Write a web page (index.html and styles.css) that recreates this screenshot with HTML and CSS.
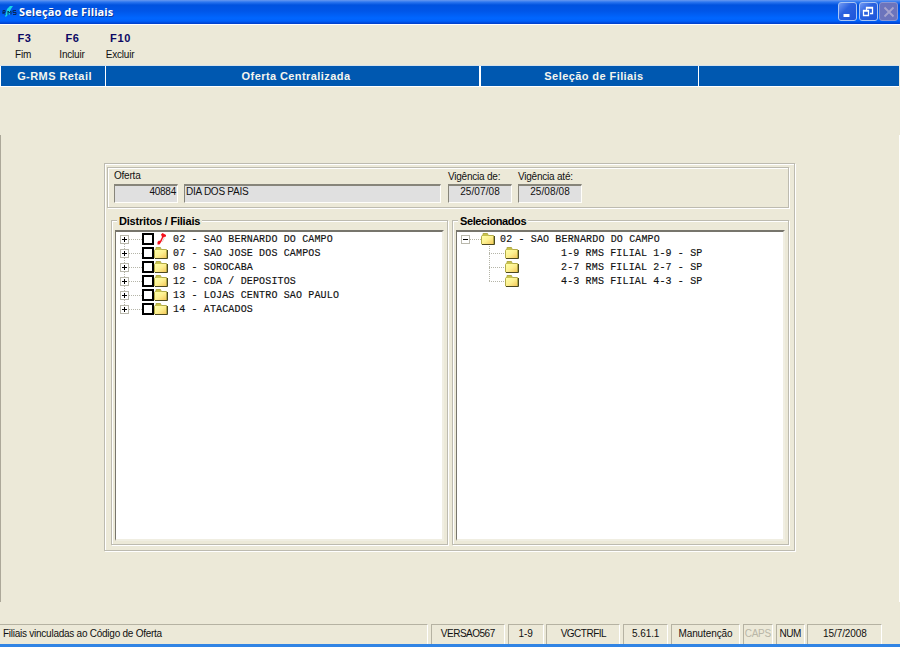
FILE: index.html
```html
<!DOCTYPE html>
<html lang="pt-BR">
<head>
<meta charset="utf-8">
<title>Seleção de Filiais</title>
<link rel="stylesheet" href="styles.css">
</head>
<body>
<svg width="0" height="0" class="defs">
  <defs>
    <linearGradient id="fold" x1="0" y1="0" x2="1" y2="1"><stop offset="0" stop-color="#ffffa8"/><stop offset=".5" stop-color="#fdf090"/><stop offset="1" stop-color="#f5c95c"/></linearGradient>
    <symbol id="folder" viewBox="0 0 14 12">
      <path d="M.5 11V3.500L2 1.500V.5h4.500v1L8 2.500h4.500V11z" fill="#c9c34c" stroke="#b3ac48"/>
      <path d="M1 3h11v8H1z" fill="url(#fold)"/>
      <path d="M1 11.500h12.500V3" fill="none" stroke="#4c4820"/>
    </symbol>
    <symbol id="mark" viewBox="0 0 14 12">
      <path d="M7 1.500L8.500 0 12 2v1.500l-2 .5-1 1-1.500 3.500-2 3H3.500V9L5 7.500l1 .5 2-4z" fill="#f3101c"/>
      <path d="M10.500 4.500L9 7.500 8 9" fill="none" stroke="#d5a5a0" stroke-width=".6"/>
    </symbol>
  </defs>
</svg>
<div class="window">
  <header class="titlebar">
    <svg class="logo" width="15" height="14" viewBox="0 0 15 14"><path d="M3 12L5 4 8 1h3L9 4 8 6h2L8 8l-.5 2L6 9l-1 2z" fill="#16d5e5"/><path d="M1 9V5.500h2v2H1l2 2M6 9.500V6l1.500 2L9 6v3.500M14 5.500h-3v2h3v2h-3" fill="none" stroke="#06285c" stroke-width="1"/></svg>
    <h1>Seleção de Filiais</h1>
    <div class="controls">
      <span class="ctl"><svg width="16" height="16"><path d="M3.500 11.500h6" stroke="#fff" stroke-width="3"/></svg></span>
      <span class="ctl"><svg width="16" height="16"><path d="M6.500 6V3.500h6v6H10M6 4h7M3.500 6.500h5v5h-5zM3 7h6" fill="none" stroke="#fff" stroke-width="1.300"/></svg></span>
      <span class="ctl off"><svg width="16" height="16"><path d="M3.500 3.500l9 9M12.500 3.500l-9 9" stroke="#a7a4ce" stroke-width="1.800"/></svg></span>
    </div>
  </header>
  <nav class="keys">
    <div class="key"><b>F3</b><span class="k1">Fim</span></div>
    <div class="key"><b>F6</b><span class="k2">Incluir</span></div>
    <div class="key"><b>F10</b><span class="k3">Excluir</span></div>
  </nav>
  <div class="crumbs"><span class="c1">G-RMS Retail</span><span class="c2">Oferta Centralizada</span><span class="c3">Seleção de Filiais</span><span class="c4"></span></div>
  <main class="work">
    <section class="panel etched">
      <div class="offer etched">
        <div class="field f1"><label>Oferta</label><div class="box">40884</div></div>
        <div class="field f2"><label>&nbsp;</label><div class="box">DIA DOS PAIS</div></div>
        <div class="field f3"><label>Vigência de:</label><div class="box">25/07/08</div></div>
        <div class="field f4"><label>Vigência até:</label><div class="box">25/08/08</div></div>
      </div>
      <div class="groups">
        <section class="group etched g1">
          <h2>Distritos / Filiais</h2>
          <div class="tree first">
            <div class="row"><i class="exp plus"></i><i class="dots"></i><i class="check"></i><svg class="ico"><use href="#mark"/></svg><span>02 - SAO BERNARDO DO CAMPO</span></div>
            <div class="row"><i class="exp plus"></i><i class="dots"></i><i class="check"></i><svg class="ico"><use href="#folder"/></svg><span>07 - SAO JOSE DOS CAMPOS</span></div>
            <div class="row"><i class="exp plus"></i><i class="dots"></i><i class="check"></i><svg class="ico"><use href="#folder"/></svg><span>08 - SOROCABA</span></div>
            <div class="row"><i class="exp plus"></i><i class="dots"></i><i class="check"></i><svg class="ico"><use href="#folder"/></svg><span>12 - CDA / DEPOSITOS</span></div>
            <div class="row"><i class="exp plus"></i><i class="dots"></i><i class="check"></i><svg class="ico"><use href="#folder"/></svg><span>13 - LOJAS CENTRO SAO PAULO</span></div>
            <div class="row"><i class="exp plus"></i><i class="dots"></i><i class="check"></i><svg class="ico"><use href="#folder"/></svg><span>14 - ATACADOS</span></div>
          </div>
        </section>
        <section class="group etched g2">
          <h2>Selecionados</h2>
          <div class="tree second">
            <div class="row"><i class="exp"></i><i class="dots"></i><svg class="ico"><use href="#folder"/></svg><span>02 - SAO BERNARDO DO CAMPO</span></div>
            <div class="children">
              <div class="row"><i class="dots"></i><svg class="ico"><use href="#folder"/></svg><span>1-9 RMS FILIAL 1-9 - SP</span></div>
              <div class="row"><i class="dots"></i><svg class="ico"><use href="#folder"/></svg><span>2-7 RMS FILIAL 2-7 - SP</span></div>
              <div class="row"><i class="dots"></i><svg class="ico"><use href="#folder"/></svg><span>4-3 RMS FILIAL 4-3 - SP</span></div>
            </div>
          </div>
        </section>
      </div>
    </section>
  </main>
  <footer class="status">
    <span class="s0">Filiais vinculadas ao Código de Oferta</span><span class="tight">VERSAO567</span><span>1-9</span><span class="tight">VGCTRFIL</span><span>5.61.1</span><span>Manutenção</span><span class="disabled">CAPS</span><span class="tight">NUM</span><span>15/7/2008</span>
  </footer>
</div>
</body>
</html>
```
FILE: styles.css
```css
* { box-sizing: border-box; }
body { margin: 0; background: #ece9d8; font: 10px/12px "Liberation Sans", Arial, sans-serif; color: #111; }
.defs { position: absolute; }
.window { width: 900px; height: 647px; display: flex; flex-direction: column; overflow: hidden; background: #ece9d8; border-bottom: 3px solid #3184e4; }
.titlebar { height: 25px; flex: none; display: flex; align-items: center; padding: 0 2px 1px 2px; border-bottom: 1px solid #fff; background: linear-gradient(#6999ef 0, #2d77f0 2px, #0052df 5px, #0056e8 11px, #0066ff 18px, #0061fb 21px, #003dc8 24px); }
.logo { margin-right: 2px; }
h1 { margin: 1px 0 0; font: bold 11px/16px "Open Sans", sans-serif; color: #fff; letter-spacing: .12px; text-shadow: 1px 1px #0b3899; }
.controls { margin-left: auto; display: flex; gap: 1.500px; }
.ctl { width: 19px; height: 19px; border: 1px solid #a9c5f5; border-radius: 3px; background: linear-gradient(135deg, #759cf4, #2b62df 40%, #1d54da); display: flex; align-items: center; justify-content: center; }
.ctl svg { flex: none; }
.ctl.off { background: #6c74bc; border-color: #8b96d2; }
.keys { height: 40px; flex: none; display: flex; padding-top: 7px; }
.key { width: 48px; text-align: center; display: flex; flex-direction: column; align-items: center; }
.key b { font: bold 11px/13px "Liberation Sans", sans-serif; color: #0c0864; letter-spacing: .6px; margin-left: 1px; }
.key span { margin-top: 4px; white-space: nowrap; letter-spacing: -.2px; }
.k1 { margin-right: 2px; }
.crumbs { height: 22px; flex: none; display: grid; grid-template-columns: 105px 375px 219px 1fr; margin-right: 1px; border-top: 1px solid #d7e2ea; border-bottom: 1px solid #fff; background: #0058b0; }
.crumbs span { color: #f4f5ee; font-weight: bold; font-size: 11px; line-height: 21px; text-align: center; letter-spacing: .42px; border-right: 1px solid #fff; }
.crumbs span + span { border-left: 1px solid #fff; }
.crumbs .c1 { border-left: 1px solid #fff; border-right: 0; padding-left: 3px; }
.crumbs .c2 { padding-left: 7px; }
.crumbs .c3 { padding-left: 9px; }
.crumbs .c4 { border: 0; }
.work { height: 467px; flex: none; margin-top: 48px; padding: 28px 0 0 103px; border-left: 1px solid #aca899; border-right: 1px solid #fff; }
.etched { border: 1px solid #bdbbb0; box-shadow: inset 1px 1px #fff, 1px 1px #fff; }
.panel { width: 691px; height: 388px; padding: 3px 3px 0 2px; }
.offer { width: 682px; height: 41px; display: flex; padding: 2px 0 0 6px; }
.field label { display: block; height: 14px; line-height: 14px; white-space: nowrap; letter-spacing: -.22px; }
.f1 label { line-height: 12px; }
.f1 { width: 70px; }
.f2 { width: 264px; }
.f3 { width: 70px; }
.box { height: 19px; background: #e0e0e0; border: 2px solid #fff; border-width: 2px 1px 1px 1px; border-color: #87857a #fffefa #fffefa #87857a; line-height: 11px; }
.f1 .box { width: 64px; text-align: right; padding-right: 1px; letter-spacing: -.25px; }
.f2 .box { width: 257px; padding-left: 1px; letter-spacing: -.25px; }
.f3 .box, .f4 .box { width: 64px; text-align: center; letter-spacing: .1px; }
.groups { display: grid; grid-template-columns: 337px 337px; column-gap: 4px; margin: 12px 0 0 4px; }
.group { height: 325px; padding: 9px 3px 3px; }
h2 { margin: -15px 0 3px 2px; width: max-content; padding: 0 2px; font: bold 11px/12px "Liberation Sans", sans-serif; color: #000; background: #ece9d8; letter-spacing: -.2px; }
.g2 h2 { letter-spacing: -.4px; }
.tree { height: 311px; background: #fff; border: 2px solid #77756c; border-width: 2px 2px 2px 1px; border-color: #77756c #f0eee2 #f0eee2 #77756c; font: 10px/14px "Liberation Mono", monospace; letter-spacing: .15px; }
.first { padding-left: 4px; background: repeating-linear-gradient(#b5b5a8 0 1px, transparent 1px 2px) 8px 8px / 1px 70px no-repeat, #fff; }
.second { padding-left: 4px; }
.row { height: 14px; display: flex; align-items: center; white-space: pre; }
.row span { padding-top: 2px; line-height: 14px; -webkit-text-stroke: .15px #111; }
.exp { width: 9px; height: 9px; flex: none; border: 1px solid #b9b8ac; background: linear-gradient(#000, #000) center / 5px 1px no-repeat, #fff; }
.plus { background: linear-gradient(#000, #000) center / 5px 1px no-repeat, linear-gradient(#000, #000) center / 1px 5px no-repeat, #fff; }
.dots { width: 13px; height: 1px; flex: none; background: repeating-linear-gradient(90deg, #b5b5a8 0 1px, transparent 1px 2px); }
.check { width: 12px; height: 12px; flex: none; border: 2px solid #000; background: #fff; }
.ico { width: 14px; height: 12px; flex: none; margin-right: 5px; }
.second > .row .dots { width: 11px; }
.children { margin-left: 28px; background: repeating-linear-gradient(#b5b5a8 0 1px, transparent 1px 2px) 0 0 / 1px 35px no-repeat; }
.children .dots { width: 16px; }
.children .ico { margin-right: 42px; }
.status { margin-top: auto; height: 20px; flex: none; display: grid; grid-template-columns: 428px 74px 36px 74px 45px 69px 30px 29px 75px; column-gap: 2.800px; }
.status span { border: 1px solid #b5b2a2; border-right-color: #fff; border-bottom: 0; text-align: center; line-height: 18px; white-space: nowrap; letter-spacing: -.1px; }
.status .s0 { border-left: 0; text-align: left; padding-left: 3px; letter-spacing: -.25px; }
.status .tight { letter-spacing: -.5px; }
.status .disabled { color: #b9b6a7; letter-spacing: -.3px; }
```
